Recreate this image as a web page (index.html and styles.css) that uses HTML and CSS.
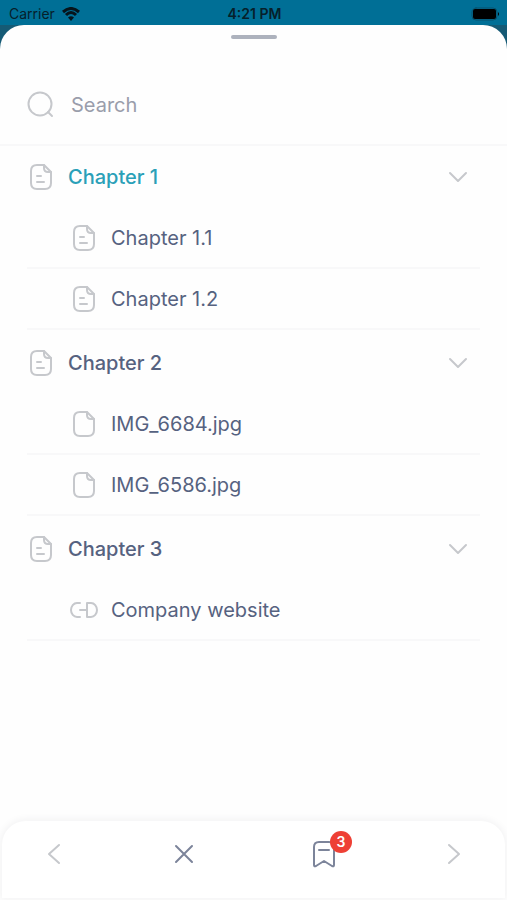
FILE: index.html
```html
<!DOCTYPE html>
<html lang="en">
<head>
<meta charset="utf-8">
<meta name="viewport" content="width=device-width, initial-scale=1">
<title>Contents</title>
<link rel="stylesheet" href="styles.css">
</head>
<body>
<svg class="defs" aria-hidden="true">
  <symbol id="file" viewBox="0 0 24 28">
    <path d="M8 2H15L22 9V20Q22 26 16 26H8Q2 26 2 20V8Q2 2 8 2Z"/>
    <path d="M15 2V5Q15 9 19 9H22"/>
  </symbol>
  <symbol id="doc" viewBox="0 0 24 28">
    <use href="#file"/>
    <path d="M8 13H12M8 19H15"/>
  </symbol>
  <symbol id="down" viewBox="0 0 20 12"><path d="M2 2L10 10L18 2"/></symbol>
</svg>
<header class="status">
  <span class="carrier">Carrier
    <svg class="wifi" viewBox="0 0 18 14" aria-hidden="true"><path d="M1 5Q9-2 17 5M4 8Q9 3 14 8"/><path class="solid" d="M6 10.500Q9 8 12 10.500L9 14Z"/></svg>
  </span>
  <time>4:21 PM</time>
  <svg class="battery" viewBox="0 0 29 14" aria-hidden="true"><rect class="case" x="1" y="1" width="25" height="12" rx="4"/><rect x="2" y="2" width="23" height="10" rx="2"/><path d="M27 5Q29 7 27 9Z"/></svg>
</header>
<main class="sheet">
  <div class="handle"></div>
  <label class="search">
    <svg viewBox="0 0 28 28" aria-hidden="true"><circle cx="13" cy="13" r="11.500"/><path d="M21 21L25 25"/></svg>
    <input type="search" placeholder="Search" aria-label="Search">
  </label>
  <nav class="contents" aria-label="Contents">
    <section>
      <button class="chapter active"><svg class="icon" aria-hidden="true"><use href="#doc"/></svg><span>Chapter 1</span><svg class="chevron" aria-hidden="true"><use href="#down"/></svg></button>
      <ul>
        <li><a href="#"><svg class="icon" aria-hidden="true"><use href="#doc"/></svg>Chapter 1.1</a></li>
        <li><a href="#"><svg class="icon" aria-hidden="true"><use href="#doc"/></svg>Chapter 1.2</a></li>
      </ul>
    </section>
    <section>
      <button class="chapter"><svg class="icon" aria-hidden="true"><use href="#doc"/></svg><span>Chapter 2</span><svg class="chevron" aria-hidden="true"><use href="#down"/></svg></button>
      <ul>
        <li><a href="#"><svg class="icon" aria-hidden="true"><use href="#file"/></svg>IMG_6684.jpg</a></li>
        <li><a href="#"><svg class="icon" aria-hidden="true"><use href="#file"/></svg>IMG_6586.jpg</a></li>
      </ul>
    </section>
    <section>
      <button class="chapter"><svg class="icon" aria-hidden="true"><use href="#doc"/></svg><span>Chapter 3</span><svg class="chevron" aria-hidden="true"><use href="#down"/></svg></button>
      <ul>
        <li><a href="#"><svg class="icon link" viewBox="0 0 30 18" aria-hidden="true"><path d="M11 2H8A6 7 0 0 0 8 16H11M11 9H18M18 2H22A6 7 0 0 1 22 16H18Z"/></svg>Company website</a></li>
      </ul>
    </section>
  </nav>
  <footer class="toolbar">
    <div class="group">
      <button class="faint" aria-label="Previous"><svg width="14" height="22" viewBox="0 0 14 22"><path d="M12 2L2 11L12 20"/></svg></button>
      <button aria-label="Close"><svg width="20" height="20" viewBox="0 0 20 20"><path d="M2 2L18 18M18 2L2 18"/></svg></button>
    </div>
    <div class="group">
      <button aria-label="Bookmarks"><svg width="24" height="28" viewBox="0 0 24 28"><path d="M2 25V7Q2 2 7 2H17Q22 2 22 7V25Q22 27 20 26L12 21L4 26Q2 27 2 25ZM7 10H17"/></svg><span class="badge">3</span></button>
      <button class="faint" aria-label="Next"><svg width="14" height="22" viewBox="0 0 14 22"><path d="M2 2L12 11L2 20"/></svg></button>
    </div>
  </footer>
</main>
</body>
</html>
```
FILE: styles.css
```css
* { box-sizing: border-box; }

body {
  margin: 0;
  min-height: 100vh;
  display: flex;
  flex-direction: column;
  background: linear-gradient(#006f96 25px, #155a75 25px);
  color: #566280;
  font: 400 20px/24px Inter, sans-serif;
}

button, input { font: inherit; color: inherit; background: none; border: 0; padding: 0; }
svg { display: block; flex: none; fill: none; stroke: #c6c8cc; stroke-width: 2; stroke-linecap: round; stroke-linejoin: round; }
.defs { position: absolute; width: 0; height: 0; }

.status {
  height: 25px;
  padding: 2px 7px 0 9px;
  display: grid;
  grid-template-columns: 1fr auto 1fr;
  align-items: center;
  color: #06202b;
  font-size: 14px;
}
.carrier { display: flex; align-items: center; gap: 7px; }
.status time { font-weight: 600; }
.wifi { width: 18px; height: 14px; stroke: #06141b; stroke-width: 3; stroke-linecap: butt; }
.wifi .solid { fill: #06141b; stroke: none; }
.battery { width: 29px; height: 14px; justify-self: end; fill: #000; stroke: none; }
.battery .case { fill: none; stroke: #07516c; stroke-width: 1; }

.sheet {
  flex: 1;
  display: flex;
  flex-direction: column;
  background: #fefefe;
  border-radius: 24px 24px 0 0;
}
.handle { width: 46px; height: 4px; margin: 10px auto 0; border-radius: 2px; background: #adb2bd; }

.search {
  display: flex;
  align-items: center;
  gap: 16px;
  height: 80px;
  margin-top: 27px;
  padding: 0 27px;
  border-bottom: 2px solid #f8f8f9;
}
.search svg { width: 28px; height: 28px; }
.search input { flex: 1; min-width: 0; outline: 0; }
.search input::placeholder { color: #9a9dab; opacity: 1; }

.contents { flex: 1; padding: 0 27px; }
section { margin-bottom: 2px; }
.chapter {
  width: 100%;
  height: 62px;
  padding: 0 12px 0 2px;
  display: flex;
  align-items: center;
  gap: 15px;
  text-align: left;
  font-weight: 500;
}
.chapter span { flex: 1; }
.active { color: #2aa0b8; }
.icon { width: 24px; height: 28px; }
.chevron { width: 20px; height: 12px; }
ul { margin: 0; padding: 0; list-style: none; }
li { border-bottom: 2px solid #f8f8f9; }
li a {
  height: 59px;
  padding-left: 45px;
  display: flex;
  align-items: center;
  gap: 15px;
  color: inherit;
  text-decoration: none;
}
.link { width: 30px; height: 18px; margin: 0 -3px; }

.toolbar {
  height: 77px;
  margin: 0 2px 2px;
  padding: 0 31px 12px 32px;
  display: flex;
  justify-content: space-between;
  align-items: center;
  background: #fff;
  border-radius: 24px 24px 0 0;
  box-shadow: 0 0 8px 1px #f1f1f2;
}
.group { flex: 0 1 170px; display: flex; justify-content: space-between; }
.toolbar button { position: relative; width: 40px; height: 40px; display: grid; place-items: center; }
.toolbar svg { stroke: #7c849a; }
.toolbar .faint svg { stroke: #c6c8cc; }
.badge {
  position: absolute;
  top: -3px;
  right: -8px;
  width: 22px;
  height: 22px;
  border-radius: 50%;
  background: #ee4035;
  color: #fff;
  font-size: 14px;
  font-weight: 600;
  line-height: 22px;
  text-align: center;
}
```
